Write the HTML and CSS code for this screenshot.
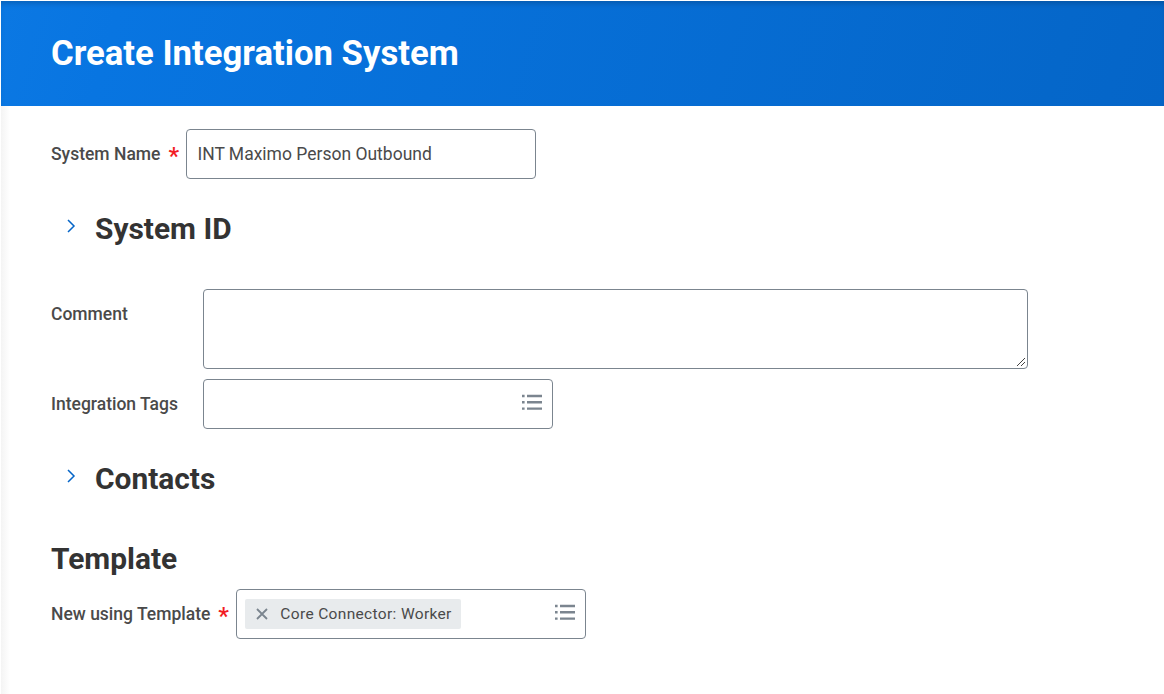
FILE: index.html
```html
<!DOCTYPE html>
<html lang="en">
<head>
<meta charset="utf-8">
<title>Create Integration System</title>
<link rel="stylesheet" href="styles.css">
</head>
<body>
<header class="banner"><h1>Create Integration System</h1></header>
<main class="form">
  <div class="row name-row">
    <label class="label">System Name</label><span class="required">*</span>
    <div class="field name-field">INT Maximo Person Outbound</div>
  </div>
  <section class="toggle">
    <svg class="chevron" width="10" height="16" viewBox="0 0 10 16"><path d="M2 2 8 8 2 14"/></svg>
    <h2>System ID</h2>
  </section>
  <div class="row comment-row">
    <span class="label wide">Comment</span>
    <div class="field comment"><svg class="grip" width="10" height="10" viewBox="0 0 10 10"><path d="M1 9 9 1M5 9 9 5"/></svg></div>
  </div>
  <div class="row tags-row">
    <span class="label wide">Integration Tags</span>
    <div class="field prompt"><svg class="list" width="20" height="16" viewBox="0 0 20 16"><path d="M0 2h2.6M5 2h15M0 8.3h2.6M5 8.3h15M0 14.6h2.6M5 14.6h15"/></svg></div>
  </div>
  <section class="toggle">
    <svg class="chevron" width="10" height="16" viewBox="0 0 10 16"><path d="M2 2 8 8 2 14"/></svg>
    <h2>Contacts</h2>
  </section>
  <h2 class="template">Template</h2>
  <div class="row">
    <span class="label">New using Template</span><span class="required">*</span>
    <div class="field prompt">
      <span class="chip"><svg class="remove" width="12" height="12" viewBox="0 0 12 12"><path d="M1 1 11 11M11 1 1 11"/></svg>Core Connector: Worker</span>
      <svg class="list" width="20" height="16" viewBox="0 0 20 16"><path d="M0 2h2.6M5 2h15M0 8.3h2.6M5 8.3h15M0 14.6h2.6M5 14.6h15"/></svg>
    </div>
  </div>
</main>
</body>
</html>
```
FILE: styles.css
```css
* { box-sizing: border-box; }
body { margin: 0; height: 694px; overflow: hidden; background: #fff; color: #333; font-family: Roboto, sans-serif; }
h1, h2 { margin: 0; font-weight: 700; }
.banner { height: 105px; margin: 1px 0 0 1px; padding: 31px 50px; background: linear-gradient(106deg, #0b78e3, #0875e1 10%, #0567ca 90%, #0565c8); box-shadow: inset 0 5px 6px -3px rgba(0, 0, 0, .22); color: #fff; }
h1 { font-size: 34.7px; line-height: 42px; }
.form { margin-left: 1px; padding: 23px 50px 0; height: 588px; background: linear-gradient(90deg, #f4f4f4, #fff 9px); }
.row { display: flex; align-items: flex-start; height: 50px; }
.label { font-size: 17.5px; font-weight: 500; line-height: 50px; color: #4a4a4a; white-space: nowrap; }
.label.wide { width: 152px; }
.required { width: 26px; padding-left: 8px; color: #f21c24; font-size: 24px; line-height: 54px; font-weight: 500; }
.field { border: 1px solid #7b858f; border-radius: 4px; width: 350px; height: 50px; background: #fff; }
.name-field { padding-left: 10px; font-size: 17.5px; line-height: 48px; color: #4a4a4a; }
.toggle { display: flex; height: 50px; margin-top: 25px; padding-left: 15px; }
h2 { font-size: 29.9px; line-height: 50px; }
.chevron { margin: 14px 19px 0 0; fill: none; stroke: #0565c8; stroke-width: 1.5; }
.comment-row { height: 80px; margin-top: 35px; }
.comment { width: 825px; height: 80px; display: flex; align-items: flex-end; justify-content: flex-end; padding: 1px; }
.grip { fill: none; stroke: #444; stroke-width: 1; }
.tags-row { margin-top: 10px; }
.prompt { display: flex; align-items: center; padding: 0 10px 0 8px; }
.list { margin: -4px 0 0 auto; fill: none; stroke: #7b858f; stroke-width: 2.4; }
.template { margin-top: 30px; margin-bottom: 5px; }
.chip { display: flex; align-items: center; height: 30px; padding: 0 9px 0 11px; background: #e8ebed; border-radius: 2px; font-size: 15.5px; letter-spacing: .34px; color: #4a4a4a; white-space: nowrap; }
.remove { margin-right: 12px; fill: none; stroke: #7b858f; stroke-width: 1.8; }
```
